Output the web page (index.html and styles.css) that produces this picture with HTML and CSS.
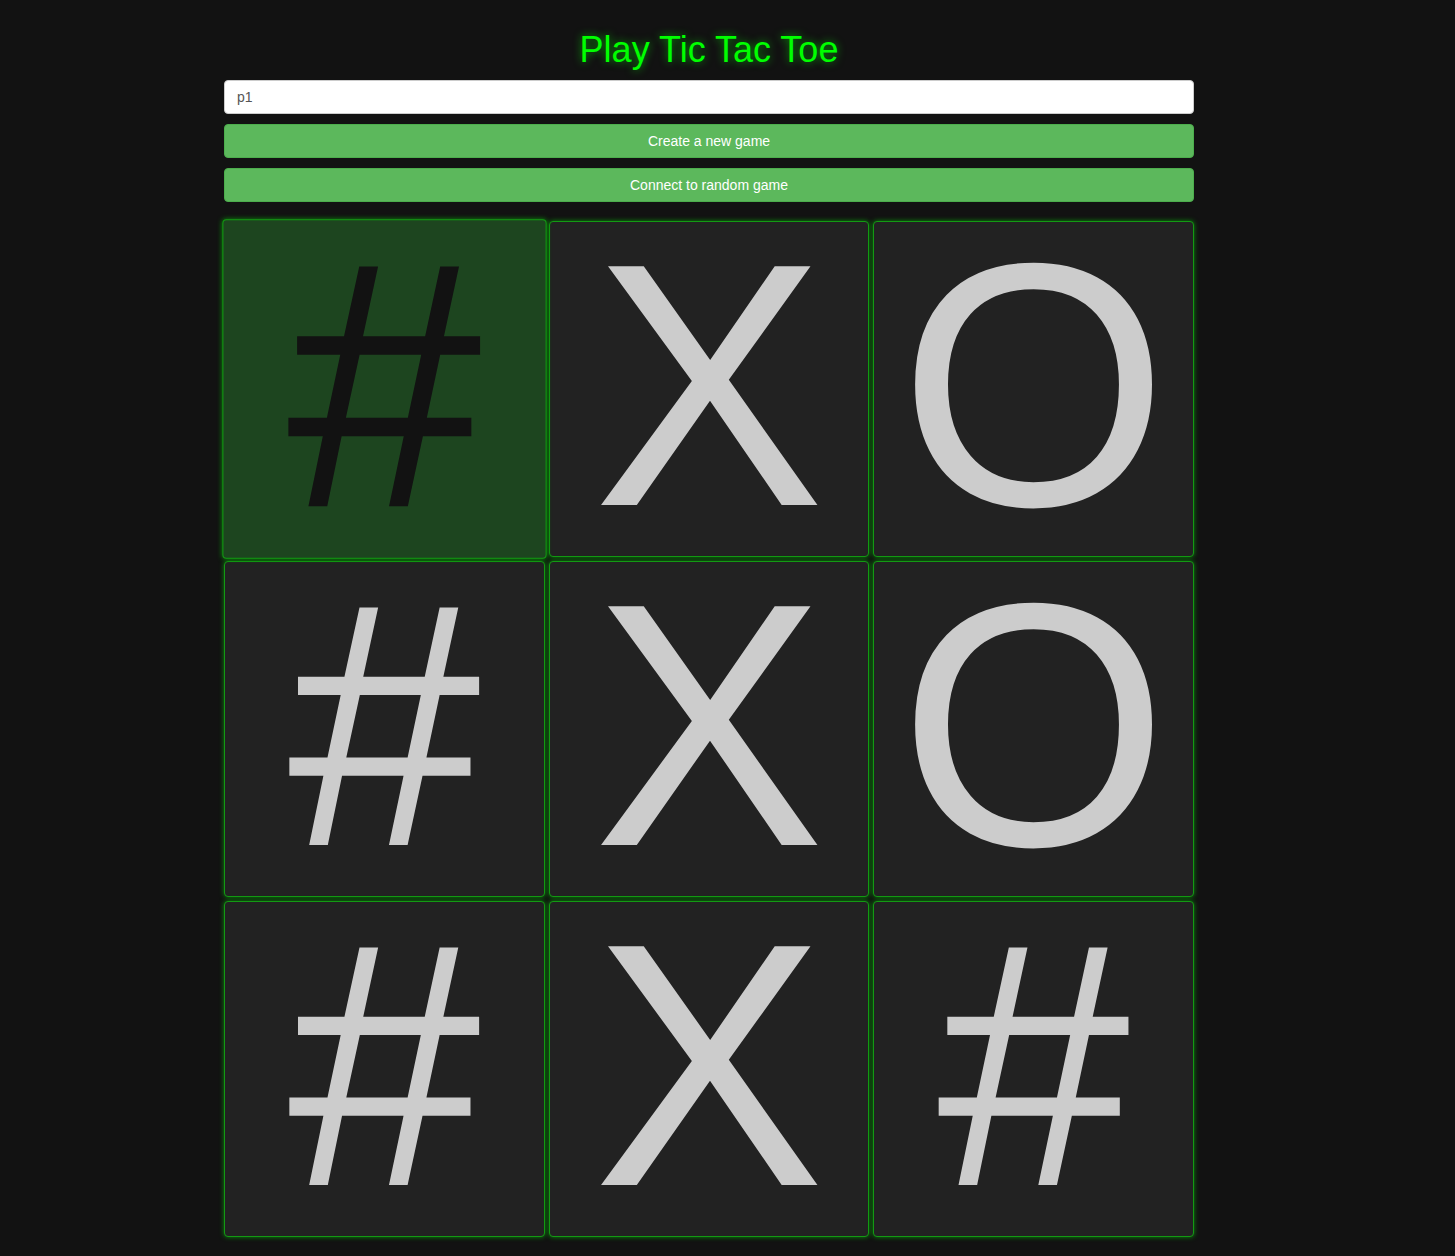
FILE: index.html
```html
<!DOCTYPE html>
<html>
<head>
<meta charset="utf-8">
<title>Play Tic Tac Toe</title>
<link rel="stylesheet" href="styles.css">
</head>
<body>
<div class="container">
  <h1 class="title">Play Tic Tac Toe</h1>
  <input class="name-input" type="text" value="p1">
  <button class="btn">Create a new game</button>
  <button class="btn">Connect to random game</button>
  <div class="board">
    <div class="cell active">#</div>
    <div class="cell">X</div>
    <div class="cell">O</div>
    <div class="cell">#</div>
    <div class="cell">X</div>
    <div class="cell">O</div>
    <div class="cell">#</div>
    <div class="cell">X</div>
    <div class="cell">#</div>
  </div>
</div>
</body>
</html>
```
FILE: styles.css
```css
html, body {
  margin: 0;
  padding: 0;
  background: #121212;
  font-family: "Liberation Sans", Arial, sans-serif;
}

.container {
  width: 970px;
  margin: 0 0 0 224px;
  padding-top: 29px;
}

.title {
  margin: 0 0 10px;
  font-size: 36px;
  font-weight: normal;
  line-height: 41px;
  text-align: center;
  color: #00ff00;
  text-shadow: 0 0 8px rgba(0, 255, 0, 0.6);
}

.name-input {
  display: block;
  box-sizing: border-box;
  width: 100%;
  height: 34px;
  margin: 0 0 10px;
  padding: 0 12px;
  border: 1px solid #ccc;
  border-radius: 4px;
  background: #fff;
  color: #555;
  font-family: "Liberation Sans", Arial, sans-serif;
  font-size: 14px;
  outline: none;
}

.btn {
  display: block;
  box-sizing: border-box;
  width: 100%;
  height: 34px;
  margin: 0 0 10px;
  padding: 0;
  border: 1px solid #4cae4c;
  border-radius: 4px;
  background: #5cb85c;
  color: #fff;
  font-family: "Liberation Sans", Arial, sans-serif;
  font-size: 14px;
  cursor: pointer;
}

.board {
  display: grid;
  grid-template-columns: repeat(3, 1fr);
  gap: 4px;
  margin-top: 19px;
  padding-bottom: 20px;
}

.cell {
  box-sizing: border-box;
  height: 336px;
  border: 1px solid #139a13;
  border-radius: 4px;
  background: #222;
  box-shadow: 0 0 5px #0a8a0a;
  color: #ccc;
  font-size: 347px;
  line-height: 326px;
  text-align: center;
}

.cell.active {
  background: #1d451f;
  color: #121212;
  transform: scale(1.01);
}
```
